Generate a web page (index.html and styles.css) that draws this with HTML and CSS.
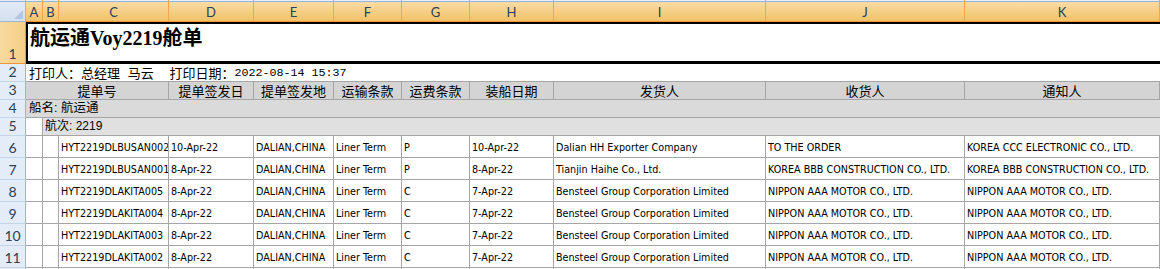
FILE: index.html
```html
<!DOCTYPE html>
<html lang="zh">
<head>
<meta charset="utf-8">
<title>航运通Voy2219舱单</title>
<link rel="stylesheet" href="styles.css">
</head>
<body>
<div class="sheet">
  <div class="corner"><svg width="9" height="9" viewBox="0 0 9 9"><polygon points="9,0 9,9 0,9" fill="#b3c6df"/></svg></div>
  <div class="col">A</div><div class="col">B</div><div class="col">C</div><div class="col">D</div><div class="col">E</div><div class="col">F</div><div class="col">G</div><div class="col">H</div><div class="col">I</div><div class="col">J</div><div class="col">K</div>

  <div class="rh sel">1</div>
  <div class="title">航运通Voy2219舱单</div>

  <div class="rh">2</div>
  <div class="info">打印人：总经理 马云  打印日期：<span class="dt">2022-08-14 15:37</span></div>

  <div class="rh">3</div>
  <div class="hd span-ac">提单号</div><div class="hd">提单签发日</div><div class="hd">提单签发地</div><div class="hd">运输条款</div><div class="hd">运费条款</div><div class="hd">装船日期</div><div class="hd">发货人</div><div class="hd">收货人</div><div class="hd">通知人</div>

  <div class="rh">4</div>
  <div class="ship">船名: 航运通</div>

  <div class="rh">5</div>
  <div class="c"></div><div class="voy">航次: 2219</div>

  <div class="rh">6</div>
  <div class="c"></div><div class="c"></div><div class="c">HYT2219DLBUSAN002</div><div class="c">10-Apr-22</div><div class="c">DALIAN,CHINA</div><div class="c">Liner Term</div><div class="c">P</div><div class="c">10-Apr-22</div><div class="c">Dalian HH Exporter Company</div><div class="c">TO THE ORDER</div><div class="c">KOREA CCC ELECTRONIC CO., LTD.</div>

  <div class="rh">7</div>
  <div class="c"></div><div class="c"></div><div class="c">HYT2219DLBUSAN001</div><div class="c">8-Apr-22</div><div class="c">DALIAN,CHINA</div><div class="c">Liner Term</div><div class="c">P</div><div class="c">8-Apr-22</div><div class="c">Tianjin Haihe Co., Ltd.</div><div class="c">KOREA BBB CONSTRUCTION CO., LTD.</div><div class="c">KOREA BBB CONSTRUCTION CO., LTD.</div>

  <div class="rh">8</div>
  <div class="c"></div><div class="c"></div><div class="c">HYT2219DLAKITA005</div><div class="c">8-Apr-22</div><div class="c">DALIAN,CHINA</div><div class="c">Liner Term</div><div class="c">C</div><div class="c">7-Apr-22</div><div class="c">Bensteel Group Corporation Limited</div><div class="c">NIPPON AAA MOTOR CO., LTD.</div><div class="c">NIPPON AAA MOTOR CO., LTD.</div>

  <div class="rh">9</div>
  <div class="c"></div><div class="c"></div><div class="c">HYT2219DLAKITA004</div><div class="c">8-Apr-22</div><div class="c">DALIAN,CHINA</div><div class="c">Liner Term</div><div class="c">C</div><div class="c">7-Apr-22</div><div class="c">Bensteel Group Corporation Limited</div><div class="c">NIPPON AAA MOTOR CO., LTD.</div><div class="c">NIPPON AAA MOTOR CO., LTD.</div>

  <div class="rh">10</div>
  <div class="c"></div><div class="c"></div><div class="c">HYT2219DLAKITA003</div><div class="c">8-Apr-22</div><div class="c">DALIAN,CHINA</div><div class="c">Liner Term</div><div class="c">C</div><div class="c">7-Apr-22</div><div class="c">Bensteel Group Corporation Limited</div><div class="c">NIPPON AAA MOTOR CO., LTD.</div><div class="c">NIPPON AAA MOTOR CO., LTD.</div>

  <div class="rh">11</div>
  <div class="c"></div><div class="c"></div><div class="c">HYT2219DLAKITA002</div><div class="c">8-Apr-22</div><div class="c">DALIAN,CHINA</div><div class="c">Liner Term</div><div class="c">C</div><div class="c">7-Apr-22</div><div class="c">Bensteel Group Corporation Limited</div><div class="c">NIPPON AAA MOTOR CO., LTD.</div><div class="c">NIPPON AAA MOTOR CO., LTD.</div>

  <div class="rh"></div>
  <div class="c"></div><div class="c"></div><div class="c"></div><div class="c"></div><div class="c"></div><div class="c"></div><div class="c"></div><div class="c"></div><div class="c"></div><div class="c"></div><div class="c"></div>
</div>
</body>
</html>
```

FILE: styles.css
```css
* { box-sizing: border-box; }
html, body { margin: 0; padding: 0; background: #ffffff; }
body {
  width: 1160px;
  height: 269px;
  overflow: hidden;
  font-family: "Liberation Sans", "Noto Sans CJK SC", sans-serif;
}

.sheet {
  display: grid;
  grid-template-columns: 26px 17px 16px 110px 85px 80px 68px 68px 84px 212px 199px 195px;
  grid-template-rows: 22px 42px 18px 18px 18px 18px repeat(7, 22px);
}

.corner {
  background: linear-gradient(to bottom, #e8eef7 0 1px, #94b4e0 1px 2px, #e2eaf6 2px, #d4e0f0 100%);
  border-right: 1px solid #9eb6ce;
  border-bottom: 1px solid #9eb6ce;
  display: flex;
  justify-content: flex-end;
  align-items: flex-end;
  padding: 0 2px 2px 0;
}

.col {
  background: linear-gradient(to bottom, #e8eef7 0 1px, #94b4e0 1px 2px, #f9dba5 2px, #f1c368 100%);
  border-right: 1px solid #f0a850;
  border-bottom: 1px solid #f29536;
  display: flex;
  align-items: center;
  justify-content: center;
  padding-top: 2px;
  font-family: "Lato", "Liberation Sans", sans-serif;
  font-size: 13px;
  color: #27415f;
}

.rh {
  background: #e4ecf7;
  border-right: 1px solid #9eb6ce;
  border-bottom: 1px solid #c5d4e7;
  display: flex;
  align-items: flex-end;
  justify-content: center;
  padding-bottom: 1px;
  font-family: "Lato", "Liberation Sans", sans-serif;
  font-size: 14px;
  line-height: 16px;
  color: #27415f;
}
.rh.sel {
  background: linear-gradient(to right, #f9d9a0, #f6cf86);
  border-right-color: #f29536;
  border-bottom-color: #f29536;
}

.title {
  grid-column: 2 / -1;
  border-top: 2px solid #000;
  border-left: 2px solid #000;
  border-bottom: 3px solid #000;
  padding: 2px 0 0 2px;
  font-family: "Liberation Serif", "Noto Sans CJK SC", serif;
  font-weight: bold;
  font-size: 20px;
  line-height: 24px;
  color: #000;
  white-space: nowrap;
}

.info {
  grid-column: 2 / -1;
  border-bottom: 1px solid #a6a6a6;
  padding-left: 3px;
  display: flex;
  align-items: center;
  white-space: pre;
  font-family: "Liberation Mono", "Noto Sans CJK SC", monospace;
  font-size: 13px;
  color: #000;
}
.info .dt { font-size: 11.7px; }

.hd {
  background: #d4d4d4;
  border-right: 1px solid #a6a6a6;
  border-bottom: 1px solid #a6a6a6;
  text-align: center;
  font-family: "Noto Sans CJK SC", sans-serif;
  font-size: 13px;
  line-height: 17px;
  color: #000;
  white-space: nowrap;
  overflow: hidden;
}
.span-ac { grid-column: 2 / 5; }

.ship {
  grid-column: 2 / -1;
  background: #dadada;
  border-bottom: 1px solid #a6a6a6;
  padding-left: 3px;
  font-family: "Liberation Sans", "Noto Sans CJK SC", sans-serif;
  font-size: 12.5px;
  line-height: 17px;
  color: #000;
}

.voy {
  grid-column: 3 / -1;
  background: #e0e0e0;
  border-bottom: 1px solid #a6a6a6;
  padding-left: 2px;
  font-family: "Liberation Sans", "Noto Sans CJK SC", sans-serif;
  font-size: 12px;
  line-height: 17px;
  color: #000;
}

.c {
  background: #ffffff;
  border-right: 1px solid #a6a6a6;
  border-bottom: 1px solid #a6a6a6;
  padding: 1px 0 0 2px;
  display: flex;
  align-items: center;
  white-space: nowrap;
  overflow: hidden;
  font-family: "DejaVu Sans Condensed", "Liberation Sans", sans-serif;
  font-stretch: condensed;
  font-size: 10.7px;
  color: #000;
}
```
